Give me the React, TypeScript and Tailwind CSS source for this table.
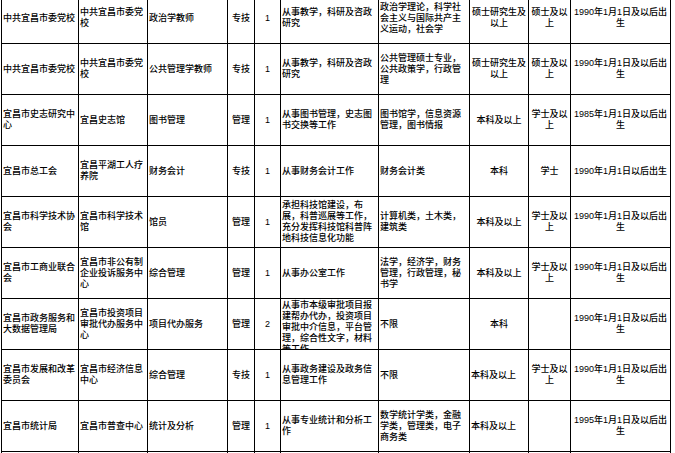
import React from "react";

type Cell = { t: string; a?: "l" | "c"; top?: boolean };

const rows: Cell[][] = [
  [
    { t: "中共宜昌市委党校" },
    { t: "中共宜昌市委党校" },
    { t: "政治学教师" },
    { t: "专技", a: "c" },
    { t: "1", a: "c" },
    { t: "从事教学，科研及咨政研究" },
    { t: "政治学理论，科学社会主义与国际共产主义运动，社会学" },
    { t: "硕士研究生及以上", a: "c" },
    { t: "硕士及以上", a: "c" },
    { t: "1990年1月1日及以后出生", a: "c" },
  ],
  [
    { t: "中共宜昌市委党校" },
    { t: "中共宜昌市委党校" },
    { t: "公共管理学教师" },
    { t: "专技", a: "c" },
    { t: "1", a: "c" },
    { t: "从事教学，科研及咨政研究" },
    { t: "公共管理硕士专业，公共政策学，行政管理" },
    { t: "硕士研究生及以上", a: "c" },
    { t: "硕士及以上", a: "c" },
    { t: "1990年1月1日及以后出生", a: "c" },
  ],
  [
    { t: "宜昌市史志研究中心" },
    { t: "宜昌史志馆" },
    { t: "图书管理" },
    { t: "管理", a: "c" },
    { t: "1", a: "c" },
    { t: "从事图书管理，史志图书交换等工作" },
    { t: "图书馆学，信息资源管理，图书情报" },
    { t: "本科及以上", a: "c" },
    { t: "学士及以上", a: "c" },
    { t: "1985年1月1日及以后出生", a: "c" },
  ],
  [
    { t: "宜昌市总工会" },
    { t: "宜昌平湖工人疗养院" },
    { t: "财务会计" },
    { t: "专技", a: "c" },
    { t: "1", a: "c" },
    { t: "从事财务会计工作" },
    { t: "财务会计类" },
    { t: "本科", a: "c" },
    { t: "学士", a: "c" },
    { t: "1990年1月1日以后出生", a: "c" },
  ],
  [
    { t: "宜昌市科学技术协会" },
    { t: "宜昌市科学技术馆" },
    { t: "馆员" },
    { t: "管理", a: "c" },
    { t: "1", a: "c" },
    { t: "承担科技馆建设，布展，科普巡展等工作，充分发挥科技馆科普阵地科技信息化功能" },
    { t: "计算机类，土木类，建筑类" },
    { t: "本科及以上", a: "c" },
    { t: "学士及以上", a: "c" },
    { t: "1990年1月1日及以后出生", a: "c" },
  ],
  [
    { t: "宜昌市工商业联合会" },
    { t: "宜昌市非公有制企业投诉服务中心" },
    { t: "综合管理" },
    { t: "管理", a: "c" },
    { t: "1", a: "c" },
    { t: "从事办公室工作" },
    { t: "法学，经济学，财务管理，行政管理，秘书学" },
    { t: "本科及以上", a: "c" },
    { t: "学士及以上", a: "c" },
    { t: "1990年1月1日及以后出生", a: "c" },
  ],
  [
    { t: "宜昌市政务服务和大数据管理局" },
    { t: "宜昌市投资项目审批代办服务中心" },
    { t: "项目代办服务" },
    { t: "管理", a: "c" },
    { t: "2", a: "c" },
    { t: "从事市本级审批项目报建帮办代办，投资项目审批中介信息，平台管理，综合性文字，材料等工作", top: true },
    { t: "不限" },
    { t: "本科", a: "c" },
    { t: "", a: "c" },
    { t: "1990年1月1日及以后出生", a: "c" },
  ],
  [
    { t: "宜昌市发展和改革委员会" },
    { t: "宜昌市经济信息中心" },
    { t: "综合管理" },
    { t: "专技", a: "c" },
    { t: "1", a: "c" },
    { t: "从事政务建设及政务信息管理工作" },
    { t: "不限" },
    { t: "本科及以上" },
    { t: "学士及以上", a: "c" },
    { t: "1990年1月1日及以后出生", a: "c" },
  ],
  [
    { t: "宜昌市统计局" },
    { t: "宜昌市普查中心" },
    { t: "统计及分析" },
    { t: "管理", a: "c" },
    { t: "1", a: "c" },
    { t: "从事专业统计和分析工作" },
    { t: "数学统计学类，金融学类，管理类，电子商务类" },
    { t: "本科及以上" },
    { t: "", a: "c" },
    { t: "1995年1月1日及以后出生", a: "c" },
  ],
  [
    { t: "" },
    { t: "" },
    { t: "" },
    { t: "" },
    { t: "" },
    { t: "" },
    { t: "" },
    { t: "" },
    { t: "" },
    { t: "" },
  ],
];

export default function App() {
  return (
    <div
      className="w-[675px] h-[453px] overflow-hidden bg-white text-black"
      style={{ fontFamily: '"Liberation Sans", "Noto Sans CJK SC", sans-serif' }}
    >
      <div className="-mt-[8px] ml-[1px] inline-grid grid-cols-[76px_68px_79px_26px_25px_97px_90px_58px_41px_99px] auto-rows-[50px] gap-px bg-black p-px text-[9px] leading-[11px] font-medium">
        {rows.map((r, i) =>
          r.map((c, j) => (
            <div
              key={`${i}-${j}`}
              className={
                "bg-white overflow-hidden flex px-[1px] break-all " +
                (c.top ? "items-start pt-[1px] " : "items-center ") +
                (c.a === "c" ? "justify-center text-center" : "justify-start text-left")
              }
            >
              <div className="w-full">{c.t}</div>
            </div>
          ))
        )}
      </div>
    </div>
  );
}
